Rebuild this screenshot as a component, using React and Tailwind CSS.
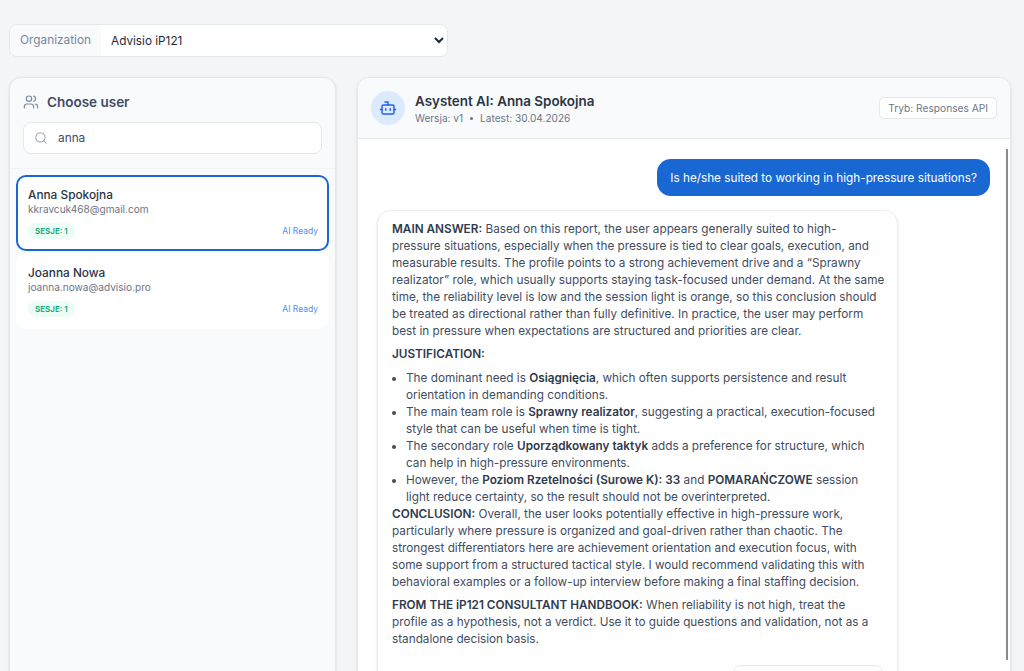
import React from "react";
import { Users, Search, Bot } from "lucide-react";

const users = [
  { name: "Anna Spokojna", email: "kkravcuk468@gmail.com", active: true },
  { name: "Joanna Nowa", email: "joanna.nowa@advisio.pro", active: false },
];

function UserCard({ user }) {
  return (
    <div
      className={`rounded-[10px] bg-white pl-[10px] pr-[9px] pt-[10px] pb-[10px] border-2 ${
        user.active ? "border-[#1967d2]" : "border-transparent"
      }`}
    >
      <div className="text-[11.84px] leading-[16px] font-medium text-[#2b3544]">{user.name}</div>
      <div className="text-[10.1px] leading-[13px] text-[#6b7688]">{user.email}</div>
      <div className="flex items-center justify-between mt-[7px]">
        <span className="rounded-full bg-[#ecfdf5] px-[7px] py-[1px] text-[8px] leading-[14px] font-semibold text-[#10a374]">
          SESJE: 1
        </span>
        <span className="text-[8.5px] leading-[14px] text-[#4f8df5]">AI Ready</span>
      </div>
    </div>
  );
}

export default function App() {
  return (
    <div className="relative h-[671px] overflow-hidden bg-[#f4f5f7] pl-[9px] pt-[24px] font-['Inter',sans-serif] text-[#414c5f]">
      {/* Organization picker */}
      <div className="flex h-[33px] w-[439px] overflow-hidden rounded-[8px] border border-[#e5e7eb] bg-white">
        <div className="flex items-center bg-[#f8fafc] px-[10px] pt-[1px] text-[11.84px] text-[#7a879b]">Organization</div>
        <select className="flex-1 bg-white pl-[6px] text-[11.75px] text-[#1f2937] outline-none" defaultValue="Advisio iP121">
          <option>Advisio iP121</option>
        </select>
      </div>

      <div className="mt-[20px] flex gap-[21px]">
        {/* Users */}
        <aside className="h-[640px] w-[327px] shrink-0 rounded-[12px] border border-[#e5e7eb] bg-[#f9fafc] shadow-sm">
          <div className="border-b border-[#f1f3f6] px-[13px] pt-[14px] pb-[14px]">
            <div className="flex items-center gap-[8px]">
              <Users className="h-[16px] w-[16px] text-[#7c8ba1]" strokeWidth={1.75} />
              <h2 className="text-[13.5px] leading-[20px] font-semibold text-[#3f4b63]">Choose user</h2>
            </div>
            <div className="mt-[10px] flex h-[32px] items-center gap-[10px] rounded-[8px] border border-[#e5e7eb] bg-white px-[10px]">
              <Search className="h-[14px] w-[14px] text-[#94a3b8]" strokeWidth={1.75} />
              <span className="pt-[2px] text-[11.84px] text-[#414c5f]">anna</span>
            </div>
          </div>
          <div className="flex flex-col gap-[2px] px-[6px] pt-[6px]">
            {users.map((u) => (
              <UserCard key={u.email} user={u} />
            ))}
          </div>
        </aside>

        {/* Chat */}
        <section className="h-[640px] w-[654px] shrink-0 overflow-hidden rounded-[12px] border border-[#e5e7eb] bg-white shadow-sm">
          <header className="flex h-[61px] items-center justify-between border-b border-[#e5e7eb] bg-[#f9fafc] px-[13px]">
            <div className="flex items-center gap-[10px]">
              <div className="flex h-[34px] w-[34px] items-center justify-center rounded-full bg-[#dbeafe]">
                <Bot className="h-[18px] w-[18px] text-[#2563eb]" strokeWidth={2} />
              </div>
              <div className="pt-[2px]">
                <div className="text-[13.4px] leading-[18px] font-semibold text-[#2b3544]">Asystent AI: Anna Spokojna</div>
                <div className="mt-[1px] flex items-center gap-[7px] text-[10.1px] leading-[15px] text-[#6b7688]">
                  <span>Wersja: v1</span>
                  <span className="h-[3px] w-[3px] rounded-full bg-[#6b7688]" />
                  <span>Latest: 30.04.2026</span>
                </div>
              </div>
            </div>
            <div className="rounded-[5px] border border-[#e5e7eb] bg-white px-[8px] py-[3px] text-[10.2px] leading-[14px] text-[#6b7688]">
              Tryb: Responses API
            </div>
          </header>

          <div className="pl-[19px] pr-[20px] pt-[20px]">
            <div className="flex justify-end">
              <div className="rounded-[14px] bg-[#1967d2] px-[13px] pt-[11px] pb-[9px] text-[11.75px] leading-[17px] text-white">
                Is he/she suited to working in high-pressure situations?
              </div>
            </div>

            <div className="mt-[14px] w-[521px] rounded-[14px] border border-[#eceef2] bg-white pl-[14px] pr-[12px] pt-[10px] pb-[40px] text-[11.75px] leading-[17px] shadow-sm">
              <p>
                <b className="font-semibold text-[#2f3a4d]">MAIN ANSWER:</b> Based on this report, the user appears generally suited to high-pressure situations, especially when the pressure is tied to clear goals, execution, and measurable results. The profile points to a strong achievement drive and a “Sprawny realizator” role, which usually supports staying task-focused under demand. At the same time, the reliability level is low and the session light is orange, so this conclusion should be treated as directional rather than fully definitive. In practice, the user may perform best in pressure when expectations are structured and priorities are clear.
              </p>
              <p className="mt-[6px] font-semibold text-[#2f3a4d]">JUSTIFICATION:</p>
              <ul className="mt-[7px] list-disc pl-[14px]">
                <li>The dominant need is <b className="font-semibold text-[#2f3a4d]">Osiągnięcia</b>, which often supports persistence and result orientation in demanding conditions.</li>
                <li>The main team role is <b className="font-semibold text-[#2f3a4d]">Sprawny realizator</b>, suggesting a practical, execution-focused style that can be useful when time is tight.</li>
                <li>The secondary role <b className="font-semibold text-[#2f3a4d]">Uporządkowany taktyk</b> adds a preference for structure, which can help in high-pressure environments.</li>
                <li>However, the <b className="font-semibold text-[#2f3a4d]">Poziom Rzetelności (Surowe K): 33</b> and <b className="font-semibold text-[#2f3a4d]">POMARAŃCZOWE</b> session light reduce certainty, so the result should not be overinterpreted.</li>
              </ul>
              <p>
                <b className="font-semibold text-[#2f3a4d]">CONCLUSION:</b> Overall, the user looks potentially effective in high-pressure work, particularly where pressure is organized and goal-driven rather than chaotic. The strongest differentiators here are achievement orientation and execution focus, with some support from a structured tactical style. I would recommend validating this with behavioral examples or a follow-up interview before making a final staffing decision.
              </p>
              <p className="mt-[6px]">
                <b className="font-semibold text-[#2f3a4d]">FROM THE iP121 CONSULTANT HANDBOOK:</b> When reliability is not high, treat the<br />profile as a hypothesis, not a verdict. Use it to guide questions and validation, not as a standalone decision basis.
              </p>
              <div className="mt-[17px] mr-[2px] ml-auto h-[30px] w-[150px] rounded-[8px] border border-[#e5e7eb] bg-white" />
            </div>
          </div>
        </section>
      </div>

      {/* Scrollbar thumb */}
      <div className="absolute top-[149px] left-[1006px] h-[511px] w-[2px] bg-[#8a8a8a]" />
    </div>
  );
}
